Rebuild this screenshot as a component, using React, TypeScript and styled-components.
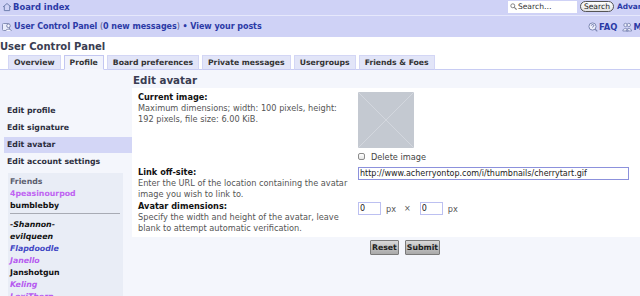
import styled, { createGlobalStyle } from "styled-components";

const GlobalStyle = createGlobalStyle`
  html, body {
    margin: 0;
    padding: 0;
    background: #ffffff;
    overflow: hidden;
  }
  body {
    font-family: "DejaVu Sans", Verdana, sans-serif;
    color: #333333;
  }
  * {
    box-sizing: border-box;
  }
`;

const linkBlue = "#2b3aa6";

const friends = [
  { name: "-Shannon-", color: "#111111", italic: true },
  { name: "evilqueen", color: "#111111", italic: true },
  { name: "Flapdoodle", color: "#3f46c4", italic: true },
  { name: "Janello", color: "#b65af0", italic: true },
  { name: "Janshotgun", color: "#111111", italic: false },
  { name: "Keling", color: "#b65af0", italic: true },
  { name: "LexiThorn", color: "#b65af0", italic: true },
];

const HomeIcon = () => (
  <svg width="10" height="10" viewBox="0 0 10 10">
    <path d="M1 5 L5 1.5 L9 5 M2.3 4.2 V8.6 H7.7 V4.2" fill="none" stroke="#6f7fae" strokeWidth="1" />
  </svg>
);

const UcpIcon = () => (
  <svg width="11" height="10" viewBox="0 0 11 10">
    <rect x="0.5" y="1.5" width="7" height="7" rx="1" fill="#e9ecfb" stroke="#8790b8" />
    <circle cx="6.5" cy="3.8" r="1.8" fill="#f4f5fd" stroke="#7d86b0" />
    <path d="M3.6 9 C3.8 6.6 9.2 6.6 9.4 9" fill="#f4f5fd" stroke="#7d86b0" />
  </svg>
);

const FaqIcon = () => (
  <svg width="10" height="10" viewBox="0 0 10 10">
    <circle cx="4.5" cy="4.5" r="3.6" fill="#eef0fb" stroke="#7e88b4" />
    <path d="M3.3 3.6 C3.3 2.2 5.8 2.2 5.8 3.6 C5.8 4.5 4.6 4.5 4.6 5.5" fill="none" stroke="#5a66a0" strokeWidth="0.9" />
    <path d="M7 7 L9.3 9.3" stroke="#7e88b4" strokeWidth="1.2" />
  </svg>
);

const MembersIcon = () => (
  <svg width="10" height="10" viewBox="0 0 10 10">
    <circle cx="3.5" cy="3" r="1.7" fill="#eef0fb" stroke="#7e88b4" strokeWidth="0.9" />
    <circle cx="6.8" cy="3" r="1.7" fill="#eef0fb" stroke="#7e88b4" strokeWidth="0.9" />
    <path d="M0.8 9 C1 5.6 6 5.6 6.2 9 Z M4.2 9 C4.4 5.6 9.4 5.6 9.6 9 Z" fill="#eef0fb" stroke="#7e88b4" strokeWidth="0.9" />
  </svg>
);

const SearchGlass = () => (
  <svg width="7" height="7" viewBox="0 0 7 7">
    <circle cx="2.8" cy="2.8" r="2" fill="none" stroke="#777" strokeWidth="0.9" />
    <path d="M4.3 4.3 L6.6 6.6" stroke="#777" strokeWidth="1.1" />
  </svg>
);

const App = () => {
  return (
    <>
      <GlobalStyle />
      <Page>
        <NavBar>
          <TopRow>
            <NavLink>
              <HomeIcon />
              <span>Board index</span>
            </NavLink>
            <SearchGroup>
              <SearchBox>
                <SearchGlass />
                <span>Search…</span>
              </SearchBox>
              <SearchButton>Search</SearchButton>
              <SmallLink>Advanced search</SmallLink>
            </SearchGroup>
          </TopRow>
          <BottomRow>
            <NavLink>
              <UcpIcon />
              <NavText>
                User Control Panel <Paren>(</Paren>0 new messages
                <Paren>)</Paren> • View your posts
              </NavText>
            </NavLink>
            <RightLinks>
              <NavLink>
                <FaqIcon />
                <span>FAQ</span>
              </NavLink>
              <NavLink>
                <MembersIcon />
                <span>Members</span>
              </NavLink>
            </RightLinks>
          </BottomRow>
        </NavBar>

        <PageTitle>User Control Panel</PageTitle>

        <TabList>
          <Tab>Overview</Tab>
          <Tab $active>Profile</Tab>
          <Tab>Board preferences</Tab>
          <Tab>Private messages</Tab>
          <Tab>Usergroups</Tab>
          <Tab>Friends &amp; Foes</Tab>
        </TabList>

        <Panel>
          <SideNav>
            <NavList>
              <NavItem>Edit profile</NavItem>
              <NavItem>Edit signature</NavItem>
              <NavItem $active>Edit avatar</NavItem>
              <NavItem>Edit account settings</NavItem>
            </NavList>
            <FriendsBox>
              <FriendsTitle>Friends</FriendsTitle>
              <Friend $color="#c064f2">4peasinourpod</Friend>
              <Friend $color="#111111">bumblebby</Friend>
              <FriendsRule />
              {friends.map((f) => (
                <Friend key={f.name} $color={f.color} $italic={f.italic}>
                  {f.name}
                </Friend>
              ))}
            </FriendsBox>
          </SideNav>

          <Main>
            <SectionTitle>Edit avatar</SectionTitle>
            <FormBox>
              <FormRow>
                <Label>
                  <strong>Current image:</strong>
                  <span>
                    Maximum dimensions; width: 100 pixels, height:
                    <br />
                    192 pixels, file size: 6.00 KiB.
                  </span>
                </Label>
                <Field>
                  <Avatar>
                    <svg width="56" height="56" viewBox="0 0 56 56">
                      <path d="M0 0 L56 56 M56 0 L0 56" stroke="#d3d7de" strokeWidth="1" />
                    </svg>
                  </Avatar>
                  <CheckRow>
                    <CheckBox type="checkbox" />
                    Delete image
                  </CheckRow>
                </Field>
              </FormRow>

              <FormRow $gap={5}>
                <Label>
                  <strong>Link off-site:</strong>
                  <span>
                    Enter the URL of the location containing the avatar
                    <br />
                    image you wish to link to.
                  </span>
                </Label>
                <Field>
                  <TextInput
                    $width={271}
                    $border="#8c91dc"
                    defaultValue="http://www.acherryontop.com/i/thumbnails/cherrytart.gif"
                  />
                </Field>
              </FormRow>

              <FormRow $gap={1}>
                <Label>
                  <strong>Avatar dimensions:</strong>
                  <span>
                    Specify the width and height of the avatar, leave
                    <br />
                    blank to attempt automatic verification.
                  </span>
                </Label>
                <DimField>
                  <TextInput $width={23} $border="#bcc0f1" defaultValue="0" />
                  <Unit>px</Unit>
                  <Times>×</Times>
                  <TextInput $width={23} $border="#bcc0f1" defaultValue="0" />
                  <Unit>px</Unit>
                </DimField>
              </FormRow>
            </FormBox>

            <ButtonRow>
              <FormButton>Reset</FormButton>
              <FormButton>Submit</FormButton>
            </ButtonRow>
          </Main>
        </Panel>
      </Page>
    </>
  );
};

export default App;

const Page = styled.div`
  width: 680px;
  height: 296px;
  overflow: hidden;
  display: flex;
  flex-direction: column;
`;

const NavBar = styled.div`
  background-color: #cfd2f6;
  flex-shrink: 0;
`;

const TopRow = styled.div`
  display: flex;
  justify-content: space-between;
  align-items: flex-start;
  height: 16px;
  padding-left: 2px;
  border-bottom: 1px solid #e6e8fb;
`;

const BottomRow = styled.div`
  display: flex;
  justify-content: space-between;
  align-items: center;
  height: 21px;
  padding-left: 2px;
`;

const NavLink = styled.a`
  display: flex;
  align-items: center;
  gap: 1px;
  height: 13px;
  font-size: 8.4px;
  font-weight: bold;
  color: ${linkBlue};
  white-space: nowrap;
  cursor: pointer;
`;

const NavText = styled.span`
  font-size: 8px;
  letter-spacing: -0.05px;
`;

const Paren = styled.span`
  font-weight: normal;
  color: #555a88;
`;

const SearchGroup = styled.div`
  display: flex;
  align-items: center;
  gap: 3px;
  height: 13px;
  margin-right: -8px;
`;

const SearchBox = styled.div`
  display: flex;
  align-items: center;
  gap: 1px;
  width: 69px;
  height: 12px;
  padding-left: 2px;
  background: #ffffff;
  font-size: 7.6px;
  color: #333;
`;

const SearchButton = styled.button`
  height: 11px;
  padding: 0 3px;
  border: 1px solid #555;
  border-radius: 6px;
  background: linear-gradient(#ffffff, #e2e2e2);
  font-family: "DejaVu Sans", Verdana, sans-serif;
  font-size: 7.6px;
  line-height: 9px;
  color: #222;
`;

const SmallLink = styled.a`
  font-size: 7.4px;
  font-weight: bold;
  color: ${linkBlue};
  white-space: nowrap;
`;

const RightLinks = styled.div`
  display: flex;
  align-items: center;
  gap: 5px;
  margin-right: 3px;
`;

const PageTitle = styled.h1`
  margin: 3px 0 0;
  padding: 0;
  font-size: 10px;
  line-height: 13px;
  font-weight: bold;
  color: #3a3d52;
`;

const TabList = styled.div`
  display: flex;
  gap: 3px;
  margin-top: 2px;
  padding-left: 8px;
  border-bottom: 1px solid #c8ccf3;
  flex-shrink: 0;
`;

const Tab = styled.div<{ $active?: boolean }>`
  height: 15px;
  padding: 0 5px;
  margin-bottom: -1px;
  border: 1px solid ${(p) => (p.$active ? "#c3c7f1" : "#d3d6f5")};
  border-bottom-color: ${(p) => (p.$active ? "#f4f6fc" : "#c8ccf3")};
  background: ${(p) => (p.$active ? "#f1f3fc" : "#e2e5f8")};
  font-size: 7.7px;
  font-weight: bold;
  line-height: 13px;
  color: #333;
  white-space: nowrap;
`;

const Panel = styled.div`
  display: flex;
  flex: 1;
  background: #f4f6fc;
`;

const SideNav = styled.div`
  width: 132px;
  flex-shrink: 0;
  padding-top: 33px;
`;

const NavList = styled.div`
  display: flex;
  flex-direction: column;
  gap: 1px;
  padding-left: 4px;
`;

const NavItem = styled.div<{ $active?: boolean }>`
  height: 16px;
  padding-left: 3px;
  font-size: 7.8px;
  font-weight: bold;
  line-height: 16px;
  color: #2d2f40;
  background: ${(p) => (p.$active ? "#d3d6f6" : "transparent")};
`;

const FriendsBox = styled.div`
  width: 115px;
  margin: 3px 0 0 8px;
  padding: 3px 3px 0 2px;
  background: #e9edf6;
  height: 200px;
`;

const FriendsTitle = styled.div`
  font-size: 7.8px;
  font-weight: bold;
  line-height: 12px;
  color: #5c6070;
`;

const Friend = styled.div<{ $color: string; $italic?: boolean }>`
  font-size: 7.8px;
  font-weight: bold;
  line-height: 12px;
  color: ${(p) => p.$color};
  font-style: ${(p) => (p.$italic ? "italic" : "normal")};
`;

const FriendsRule = styled.div`
  height: 1px;
  margin: 1px 0 5px;
  background: #a8abb4;
`;

const Main = styled.div`
  flex: 1;
  display: flex;
  flex-direction: column;
`;

const SectionTitle = styled.h2`
  margin: 3px 0 1px;
  padding-left: 1px;
  font-size: 10.3px;
  line-height: 14px;
  font-weight: bold;
  color: #3a3d52;
`;

const FormBox = styled.div`
  background: #ffffff;
  padding: 4px 0 3px 6px;
`;

const FormRow = styled.div<{ $gap?: number }>`
  display: grid;
  grid-template-columns: 220px 1fr;
  margin-top: ${(p) => p.$gap ?? 0}px;
`;

const Label = styled.div`
  display: flex;
  flex-direction: column;
  font-size: 8.2px;
  line-height: 11px;
  color: #555;

  strong {
    color: #111;
  }
`;

const Field = styled.div`
  display: flex;
  flex-direction: column;
  align-items: flex-start;
`;

const Avatar = styled.div`
  width: 56px;
  height: 56px;
  background: #c4c9d1;

  svg {
    display: block;
  }
`;

const CheckRow = styled.label`
  display: flex;
  align-items: center;
  gap: 6px;
  height: 11px;
  margin-top: 3px;
  font-size: 8.2px;
  color: #444;
`;

const CheckBox = styled.input`
  appearance: none;
  width: 7px;
  height: 7px;
  margin: 0;
  border: 1px solid #8c8c8c;
  border-radius: 2px;
  background: linear-gradient(#ffffff, #e6e6e6);
`;

const TextInput = styled.input<{ $width: number; $border: string }>`
  width: ${(p) => p.$width}px;
  height: 13px;
  padding: 0 1px;
  border: 1px solid ${(p) => p.$border};
  background: #ffffff;
  font-family: "DejaVu Sans", Verdana, sans-serif;
  font-size: 8px;
  color: #222;
  outline: none;
`;

const DimField = styled.div`
  display: flex;
  align-items: center;
  height: 13px;
  margin-top: 1px;
`;

const Unit = styled.span`
  margin-left: 5px;
  font-size: 8.2px;
  color: #555;
`;

const Times = styled.span`
  margin: 0 9px 0 8px;
  font-size: 8px;
  color: #555;
`;

const ButtonRow = styled.div`
  display: flex;
  justify-content: center;
  gap: 6px;
  margin-top: 3px;
  padding-right: 2px;
`;

const FormButton = styled.button`
  height: 15px;
  padding: 0 1px;
  border: 1px solid #7a7a7a;
  border-radius: 1px;
  background: linear-gradient(#d9d9d9, #a9a9a9);
  font-family: "DejaVu Sans", Verdana, sans-serif;
  font-size: 7.8px;
  font-weight: bold;
  line-height: 13px;
  color: #222;
`;
